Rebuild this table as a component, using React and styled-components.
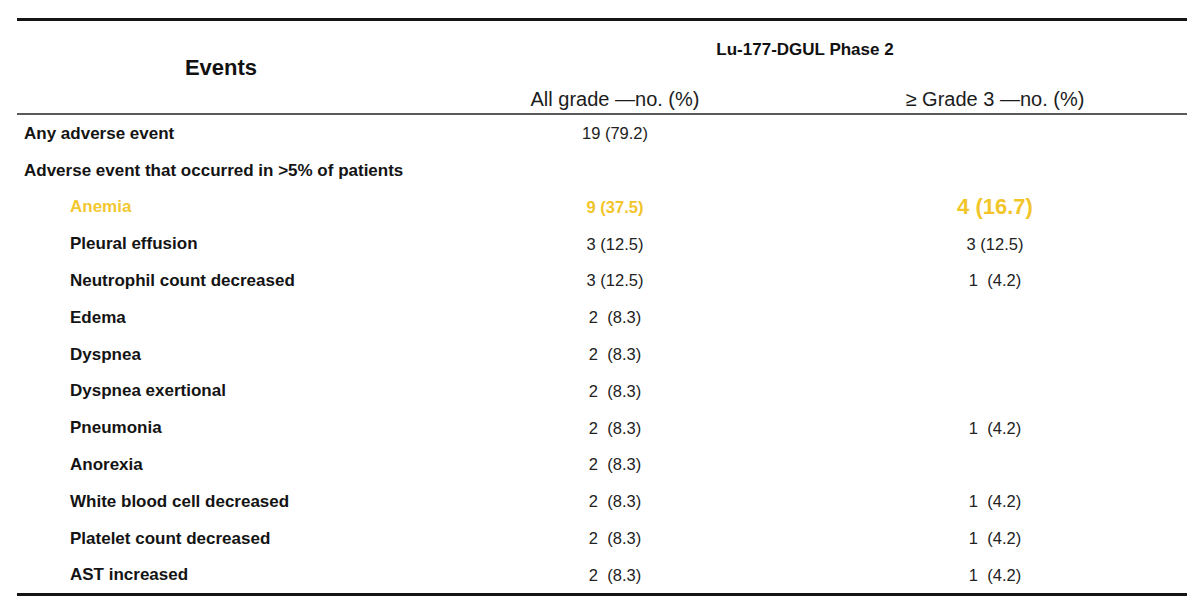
import styled, { createGlobalStyle } from 'styled-components';

const GlobalStyle = createGlobalStyle`
  html, body {
    margin: 0;
    padding: 0;
    background: #ffffff;
    font-family: "Liberation Sans", Arial, sans-serif;
    color: #111111;
  }
`

const Page = styled.div`
  width: 1200px;
  height: 613px;
  box-sizing: border-box;
  padding: 18px 13px 0 17px;
  background: #ffffff;
`

const Table = styled.div`
  width: 1170px;
  border-top: 3px solid #151515;
  border-bottom: 3px solid #151515;
`

const columns = `448px 300px 1fr 300px 42px`

const HeaderGrid = styled.div`
  display: grid;
  grid-template-columns: ${columns};
  grid-template-rows: 55px 37px;
  border-bottom: 2px solid #5a5a5a;
`

const EventsHead = styled.div`
  grid-column: 1;
  grid-row: 1 / span 2;
  display: flex;
  align-items: center;
  justify-content: center;
  padding-right: 40px;
  padding-top: 2px;
  font-size: 22px;
  font-weight: 700;
  line-height: 1;
`

const StudyTitle = styled.div`
  grid-column: 2 / span 3;
  grid-row: 1;
  display: flex;
  align-items: center;
  justify-content: center;
  padding-top: 2px;
  font-size: 17px;
  font-weight: 700;
  line-height: 1;
`

const ColHead = styled.div`
  grid-column: ${({ $col }) => $col};
  grid-row: 2;
  align-self: end;
  padding-bottom: 4px;
  text-align: center;
  font-size: 20px;
  line-height: 1;
  color: #1c1c1c;
`

const Row = styled.div`
  display: grid;
  grid-template-columns: ${columns};
  align-items: center;
  height: 36.8px;
`

const Label = styled.div`
  grid-column: 1;
  padding-left: ${({ $indent }) => ($indent ? '53px' : '7px')};
  font-size: 17px;
  font-weight: 700;
  line-height: 1;
  white-space: nowrap;
  color: ${({ $highlight }) => ($highlight ? '#f2c730' : '#141414')};
`

const Value = styled.div`
  grid-column: ${({ $col }) => $col};
  text-align: center;
  white-space: pre;
  line-height: 1;
  font-size: ${({ $big }) => ($big ? '22px' : '16.5px')};
  font-weight: ${({ $highlight }) => ($highlight ? 700 : 400)};
  color: ${({ $highlight }) => ($highlight ? '#f2c52a' : '#222222')};
`

const rows = [
  { name: 'Any adverse event', all: '19 (79.2)' },
  { name: 'Adverse event that occurred in >5% of patients' },
  { name: 'Anemia', indent: true, highlight: true, all: '9 (37.5)', g3: '4 (16.7)' },
  { name: 'Pleural effusion', indent: true, all: '3 (12.5)', g3: '3 (12.5)' },
  { name: 'Neutrophil count decreased', indent: true, all: '3 (12.5)', g3: '1  (4.2)' },
  { name: 'Edema', indent: true, all: '2  (8.3)' },
  { name: 'Dyspnea', indent: true, all: '2  (8.3)' },
  { name: 'Dyspnea exertional', indent: true, all: '2  (8.3)' },
  { name: 'Pneumonia', indent: true, all: '2  (8.3)', g3: '1  (4.2)' },
  { name: 'Anorexia', indent: true, all: '2  (8.3)' },
  { name: 'White blood cell decreased', indent: true, all: '2  (8.3)', g3: '1  (4.2)' },
  { name: 'Platelet count decreased', indent: true, all: '2  (8.3)', g3: '1  (4.2)' },
  { name: 'AST increased', indent: true, all: '2  (8.3)', g3: '1  (4.2)' },
]

export default function App() {
  return (
    <>
      <GlobalStyle />
      <Page>
        <Table>
          <HeaderGrid>
            <EventsHead>Events</EventsHead>
            <StudyTitle>Lu-177-DGUL Phase 2</StudyTitle>
            <ColHead $col={2}>All grade —no. (%)</ColHead>
            <ColHead $col={4}>≥ Grade 3 —no. (%)</ColHead>
          </HeaderGrid>

          {rows.map((r) => (
            <Row key={r.name}>
              <Label $indent={r.indent} $highlight={r.highlight}>
                {r.name}
              </Label>
              {r.all && (
                <Value $col={2} $highlight={r.highlight}>
                  {r.all}
                </Value>
              )}
              {r.g3 && (
                <Value $col={4} $highlight={r.highlight} $big={r.highlight}>
                  {r.g3}
                </Value>
              )}
            </Row>
          ))}
        </Table>
      </Page>
    </>
  )
}
